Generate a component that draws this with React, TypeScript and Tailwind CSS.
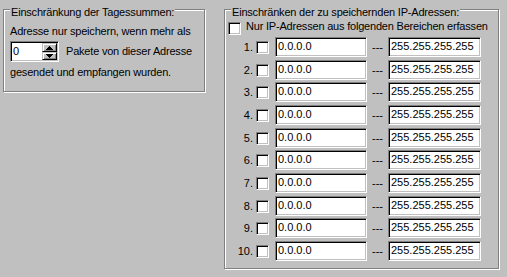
import React from "react";

const sunken =
  "bg-white border border-t-[#808080] border-l-[#808080] border-b-white border-r-white shadow-[inset_1px_1px_0_#000,inset_-1px_-1px_0_#c0c0c0]";
const raised =
  "bg-[#c0c0c0] border border-t-[#c0c0c0] border-l-[#c0c0c0] border-b-black border-r-black shadow-[inset_1px_1px_0_#fff,inset_-1px_-1px_0_#808080]";

function GroupBox({
  className,
  title,
  children,
}: {
  className: string;
  title: string;
  children: React.ReactNode;
}) {
  return (
    <div
      className={
        "relative border border-[#808080] shadow-[inset_1px_1px_0_#fff,1px_1px_0_#fff] " +
        className
      }
    >
      <div className="absolute left-[6px] top-[-4px] bg-[#c0c0c0] px-[1px] whitespace-nowrap tracking-[-0.2px]">
        {title}
      </div>
      {children}
    </div>
  );
}

function CheckBox({ className = "" }: { className?: string }) {
  return <div className={"w-[13px] h-[13px] shrink-0 " + sunken + " " + className} />;
}

const rows = [
  { n: "1.", mt: "mt-[2px]" },
  { n: "2.", mt: "mt-[3px]" },
  { n: "3.", mt: "mt-[2px]" },
  { n: "4.", mt: "mt-[3px]" },
  { n: "5.", mt: "mt-[3px]" },
  { n: "6.", mt: "mt-[2px]" },
  { n: "7.", mt: "mt-[3px]" },
  { n: "8.", mt: "mt-[3px]" },
  { n: "9.", mt: "mt-[2px]" },
  { n: "10.", mt: "mt-[3px]" },
];

export default function App() {
  return (
    <div className="w-[507px] h-[277px] bg-[#c0c0c0] flex items-start font-['Liberation_Sans',Arial,sans-serif] text-[11px] leading-[13px] text-black overflow-hidden">
      <GroupBox className="ml-[3px] mt-[9px] w-[202px] h-[83px]" title="Einschränkung der Tagessummen:">
        <div className="pl-[6px] pt-[15px] flex flex-col tracking-[-0.2px]">
          <div className="whitespace-nowrap">Adresse nur speichern, wenn mehr als</div>
          <div className="mt-[3px] flex items-center">
            <div className={"relative w-[49px] h-[21px] " + sunken}>
              <span className="absolute left-[2px] top-[3px]">0</span>
              <div className="absolute right-[1px] top-[1px] w-[15px] h-[17px] flex flex-col">
                <div className={"h-[9px] flex items-center justify-center " + raised}>
                  <svg width="7" height="4" viewBox="0 0 7 4">
                    <path d="M3 0h1v1h1v1h1v1h1v1H0V3h1V2h1V1h1z" fill="#000" />
                  </svg>
                </div>
                <div className={"h-[8px] flex items-center justify-center " + raised}>
                  <svg width="7" height="4" viewBox="0 0 7 4">
                    <path d="M0 0h7v1H6v1H5v1H4v1H3V3H2V2H1V1H0z" fill="#000" />
                  </svg>
                </div>
              </div>
            </div>
            <span className="ml-[7px] whitespace-nowrap">Pakete von dieser Adresse</span>
          </div>
          <div className="mt-[4px] whitespace-nowrap">gesendet und empfangen wurden.</div>
        </div>
      </GroupBox>

      <GroupBox className="ml-[19px] mt-[9px] w-[275px] h-[260px]" title="Einschränken der zu speichernden IP-Adressen:">
        <div className="flex flex-col">
          <div className="mt-[10px] flex items-start">
            <CheckBox className="ml-[3px] mt-[2px]" />
            <span className="ml-[5px] whitespace-nowrap tracking-[-0.2px]">Nur IP-Adressen aus folgenden Bereichen erfassen</span>
          </div>
          {rows.map((r) => (
            <div key={r.n} className={"flex items-center h-[20px] " + r.mt}>
              <div className="w-[28px] text-right whitespace-nowrap">{r.n}</div>
              <CheckBox className="ml-[3px]" />
              <div className={"ml-[6px] w-[92px] h-[20px] pl-[2px] pt-[2px] " + sunken}>0.0.0.0</div>
              <div className="w-[21px] text-center">---</div>
              <div className={"w-[93px] h-[20px] pl-[2px] pt-[2px] " + sunken}>255.255.255.255</div>
            </div>
          ))}
        </div>
      </GroupBox>
    </div>
  );
}
